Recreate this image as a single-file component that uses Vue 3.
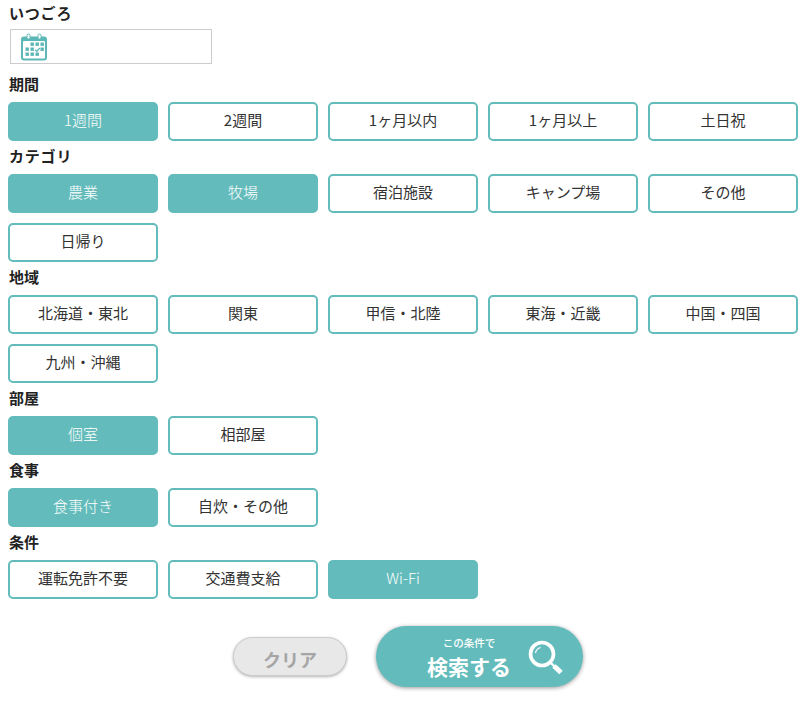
<template>
  <div class="search-form">
    <h3 class="group-title first kana">いつごろ</h3>
    <div class="date-input">
      <svg class="calendar" width="28" height="28" viewBox="0 0 28 28">
        <path d="M4 3.5h20a3 3 0 0 1 3 3v18a3 3 0 0 1-3 3H4a3 3 0 0 1-3-3v-18a3 3 0 0 1 3-3z" fill="#5cb8b7" />
        <rect x="3" y="8" width="22" height="17.5" rx="1" fill="#fff" />
        <rect x="7" y="1" width="3" height="5" rx="1.5" fill="#fff" stroke="#5cb8b7" stroke-width="1" />
        <rect x="18" y="1" width="3" height="5" rx="1.5" fill="#fff" stroke="#5cb8b7" stroke-width="1" />
        <g fill="#5cb8b7">
          <rect v-for="c in calendarCells" :key="c.x + '-' + c.y" :x="c.x" :y="c.y" width="3.4" height="3.4" />
        </g>
        <path d="M15.2 16.8l1.6 1.6 3-3.4" fill="none" stroke="#5cb8b7" stroke-width="1.3" />
      </svg>
    </div>

    <section v-for="group in groups" :key="group.title" class="group">
      <h3 class="group-title" :class="{ kana: group.kana }">{{ group.title }}</h3>
      <div class="option-grid">
        <button
          v-for="opt in group.options"
          :key="opt.label"
          class="option"
          :class="{ active: opt.active }"
        >{{ opt.label }}</button>
      </div>
    </section>

    <div class="actions">
      <button class="btn-clear">クリア</button>
      <button class="btn-search">
        <span class="search-text">
          <small>この条件で</small>
          <strong>検索する</strong>
        </span>
        <svg class="search-icon" width="37" height="37" viewBox="0 0 37 37">
          <circle cx="15" cy="16" r="11.5" fill="none" stroke="#fff" stroke-width="3.6" />
          <path d="M8.5 15a7 7 0 0 1 5-5.5" fill="none" stroke="#fff" stroke-width="1.2" />
          <path d="M24 25l4 4" stroke="#fff" stroke-width="2.4" />
          <path d="M27 28l7 6.5" stroke="#fff" stroke-width="5" />
        </svg>
      </button>
    </div>
  </div>
</template>

<script setup>
const calendarCells = [
  { x: 10.5, y: 9.5 }, { x: 15.5, y: 9.5 }, { x: 20.5, y: 9.5 },
  { x: 10.5, y: 14.5 }, { x: 5.5, y: 14.5 }, { x: 20.5, y: 14.5 },
  { x: 5.5, y: 19.5 }, { x: 10.5, y: 19.5 }, { x: 15.5, y: 19.5 }
]

const opts = (labels, active = []) =>
  labels.map(label => ({ label, active: active.includes(label) }))

const groups = [
  { title: '期間', options: opts(['1週間', '2週間', '1ヶ月以内', '1ヶ月以上', '土日祝'], ['1週間']) },
  { title: 'カテゴリ', kana: true, options: opts(['農業', '牧場', '宿泊施設', 'キャンプ場', 'その他', '日帰り'], ['農業', '牧場']) },
  { title: '地域', options: opts(['北海道・東北', '関東', '甲信・北陸', '東海・近畿', '中国・四国', '九州・沖縄']) },
  { title: '部屋', options: opts(['個室', '相部屋'], ['個室']) },
  { title: '食事', options: opts(['食事付き', '自炊・その他'], ['食事付き']) },
  { title: '条件', options: opts(['運転免許不要', '交通費支給', 'Wi-Fi'], ['Wi-Fi']) }
]
</script>

<style>
body {
  background: #fff;
}
</style>

<style scoped>
.search-form {
  width: 808px;
  height: 703px;
  padding: 0 10px 0 8px;
  box-sizing: border-box;
  font-family: "Noto Sans CJK JP", "Noto Sans", sans-serif;
  color: #222;
  overflow: hidden;
}

.group-title {
  margin: 0 0 9px 1px;
  height: 18px;
  font-size: 15px;
  line-height: 18px;
  font-weight: 700;
  color: #222;
}

.group-title.kana {
  letter-spacing: 0.8px;
}

.group-title.first {
  margin: 4px 0 7px 1px;
}

.date-input {
  width: 191px;
  height: 33px;
  margin-left: 2px;
  border: 1px solid #ccc;
  display: flex;
  align-items: center;
  padding-left: 9px;
}

.calendar {
  display: block;
}

.group {
  margin-top: 6px;
}

.date-input + .group {
  margin-top: 11px;
}

.option-grid {
  display: grid;
  grid-template-columns: repeat(5, 150px);
  gap: 10px;
}

.option {
  height: 39px;
  padding: 0 0 4px;
  background: #fff;
  border: 2px solid #63bcbb;
  border-radius: 5px;
  font-family: inherit;
  font-size: 15px;
  font-weight: 400;
  color: #333;
  cursor: pointer;
}

.option.active {
  background: #63bcbb;
  color: #fff;
  font-weight: 300;
}

.actions {
  display: flex;
  justify-content: center;
  align-items: center;
  gap: 29px;
  margin-top: 27px;
  padding-left: 10px;
}

.btn-clear {
  width: 114px;
  height: 39px;
  background: #e8e8e8;
  border: 1px solid #ccc;
  border-radius: 20px;
  box-shadow: 0 1px 3px rgba(0, 0, 0, 0.3);
  font-family: inherit;
  font-size: 18px;
  font-weight: 700;
  color: #a5a5a5;
  padding: 4px 0 0;
}

.btn-search {
  width: 207px;
  height: 61px;
  display: flex;
  align-items: center;
  padding: 3px 0 0 48px;
  gap: 13px;
  background: #63bcbb;
  border: none;
  border-radius: 31px;
  box-shadow: 0 1px 4px rgba(0, 0, 0, 0.4);
  font-family: inherit;
  color: #fff;
}

.search-text {
  display: flex;
  flex-direction: column;
  align-items: center;
  gap: 1px;
  width: 90px;
  flex: none;
}

.search-text small {
  font-size: 10.5px;
  line-height: 15px;
  font-weight: 500;
}

.search-text strong {
  font-size: 21px;
  line-height: 30px;
  font-weight: 700;
}

.search-icon {
  flex: none;
  display: block;
  margin-top: -3px;
}
</style>
